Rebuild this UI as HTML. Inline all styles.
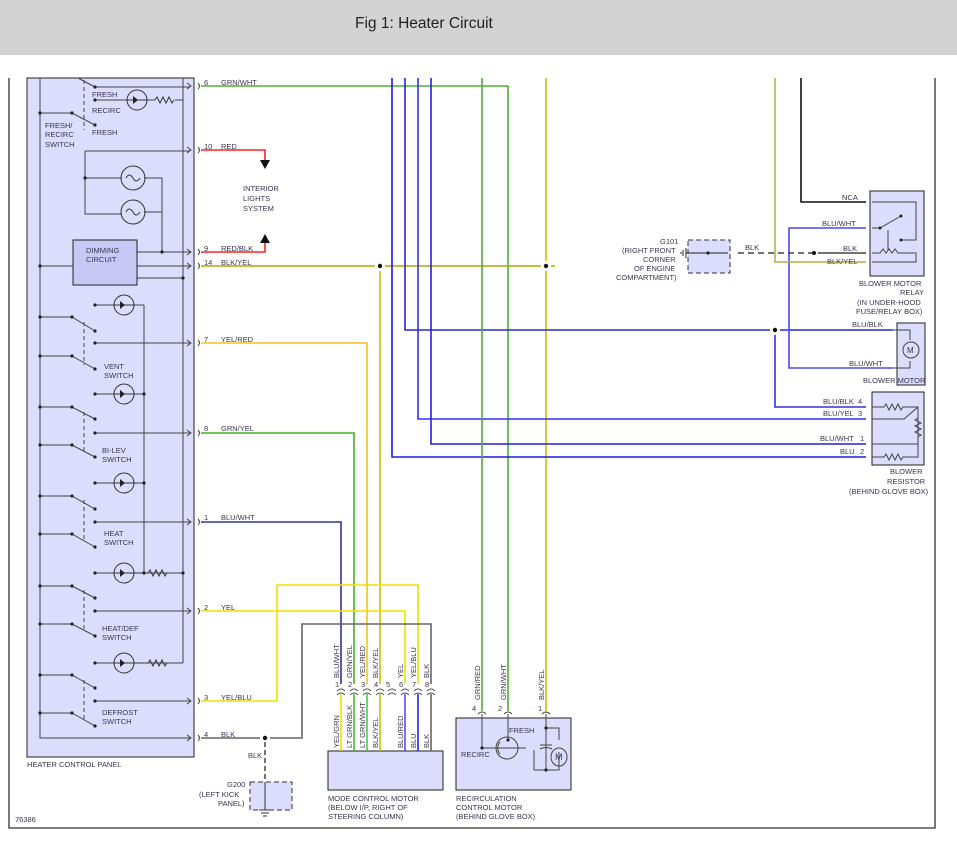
<!DOCTYPE html>
<html><head><meta charset="utf-8"><style>
html,body{margin:0;padding:0;background:#fff;width:957px;height:849px;overflow:hidden}
.hd{position:absolute;left:0;top:0;width:957px;height:55px;background:#d3d3d3}
.hd span{position:absolute;left:355px;top:15px;font-family:"Liberation Sans",sans-serif;font-size:15.5px;color:#222;white-space:nowrap}
svg{position:absolute;left:0;top:0}
text{font-family:"Liberation Sans",sans-serif;font-size:7.5px;fill:#3a3550}
</style></head><body>
<div class="hd"><span>Fig 1: Heater Circuit</span></div>
<svg width="957" height="849" viewBox="0 0 957 849" style="top:0">
<g stroke="#333" stroke-width="1.3" fill="none">
<path d="M9 78V828H935V78"/>
</g>
<rect x="27" y="78" width="167" height="679" fill="#dcdcfc" stroke="#222" stroke-width="1"/>
<g stroke="#444" stroke-width="1" fill="none">
<path d="M40 78V738H190"/>
<path d="M183 78V663"/>
<path d="M144 305V573"/>
<path d="M95 87H190M95 87L78 78"/>
<path d="M95 100H130M145 100H155M40 113H72L95 125" />
<path d="M175 100H183"/>
<path d="M85 151H190M85 151V214H122M85 178H122M144 178H162V252M144 212H162"/>
<path d="M40 266H73M137 252H190M137 266H190M137 278H183"/>
<path d="M95 305H144M40 317H72L95 331M95 343H190M40 356H72L95 369"/>
<path d="M95 394H144"/>
<path d="M40 407H72L95 419M95 433H190M40 445H72L95 457M95 483H144"/>
<path d="M40 496H72L95 509M95 522H190M40 534H72L95 547M95 573H183"/>
<path d="M40 586H72L95 598M95 611H190M40 624H72L95 636M95 663H183"/>
<path d="M40 675H72L95 688M95 701H190M40 713H72L95 726"/>
</g>
<g stroke="#444" stroke-width="1" stroke-dasharray="4,3" fill="none"><path d="M84 80V130M84 322V365M84 412V452M84 500V542M84 590V632M84 680V720"/></g>
<rect x="73" y="240" width="64" height="45" fill="#c8c8f4" stroke="#222"/>
<text x="86" y="253">DIMMING</text><text x="86" y="262">CIRCUIT</text>
<g fill="none" stroke="#333" stroke-width="1">
<circle cx="133" cy="178" r="12"/><circle cx="133" cy="212" r="12"/>
<path d="M126 178q3-6 7 0q3 6 7 0M126 212q3-6 7 0q3 6 7 0"/>
<circle cx="137" cy="100" r="10"/><circle cx="124" cy="305" r="10"/><circle cx="124" cy="394" r="10"/><circle cx="124" cy="483" r="10"/><circle cx="124" cy="573" r="10"/><circle cx="124" cy="663" r="10"/>
<path d="M155 100l2-3 3 6 3-6 3 6 3-6 3 6 2-3M148 573l2-3 3 6 3-6 3 6 3-6 3 6 2-3M148 663l2-3 3 6 3-6 3 6 3-6 3 6 2-3"/>
<path d="M114 573H148M114 663H148M114 305H134M114 394H134M114 483H134M127 100H147"/>
</g>
<g fill="#222">
<path d="M133 96l5 4-5 4zM120 301l5 4-5 4zM120 390l5 4-5 4zM120 479l5 4-5 4zM120 569l5 4-5 4zM120 659l5 4-5 4z"/>
<circle cx="40" cy="266" r="1.6"/><circle cx="40" cy="317" r="1.6"/><circle cx="72" cy="317" r="1.6"/><circle cx="40" cy="356" r="1.6"/><circle cx="72" cy="356" r="1.6"/>
<circle cx="40" cy="407" r="1.6"/><circle cx="72" cy="407" r="1.6"/><circle cx="40" cy="445" r="1.6"/><circle cx="72" cy="445" r="1.6"/>
<circle cx="40" cy="496" r="1.6"/><circle cx="72" cy="496" r="1.6"/><circle cx="40" cy="534" r="1.6"/><circle cx="72" cy="534" r="1.6"/>
<circle cx="40" cy="586" r="1.6"/><circle cx="72" cy="586" r="1.6"/><circle cx="40" cy="624" r="1.6"/><circle cx="72" cy="624" r="1.6"/>
<circle cx="40" cy="675" r="1.6"/><circle cx="72" cy="675" r="1.6"/><circle cx="40" cy="713" r="1.6"/><circle cx="72" cy="713" r="1.6"/>
<circle cx="40" cy="113" r="1.6"/><circle cx="72" cy="113" r="1.6"/>
<circle cx="95" cy="87" r="1.6"/><circle cx="95" cy="100" r="1.6"/><circle cx="95" cy="125" r="1.6"/>
<circle cx="95" cy="305" r="1.6"/><circle cx="95" cy="331" r="1.6"/><circle cx="95" cy="343" r="1.6"/><circle cx="95" cy="369" r="1.6"/><circle cx="95" cy="394" r="1.6"/>
<circle cx="95" cy="419" r="1.6"/><circle cx="95" cy="433" r="1.6"/><circle cx="95" cy="457" r="1.6"/><circle cx="95" cy="483" r="1.6"/>
<circle cx="95" cy="509" r="1.6"/><circle cx="95" cy="522" r="1.6"/><circle cx="95" cy="547" r="1.6"/><circle cx="95" cy="573" r="1.6"/>
<circle cx="95" cy="598" r="1.6"/><circle cx="95" cy="611" r="1.6"/><circle cx="95" cy="636" r="1.6"/><circle cx="95" cy="663" r="1.6"/>
<circle cx="95" cy="688" r="1.6"/><circle cx="95" cy="701" r="1.6"/><circle cx="95" cy="726" r="1.6"/>
<circle cx="144" cy="394" r="1.6"/><circle cx="144" cy="483" r="1.6"/><circle cx="144" cy="573" r="1.6"/><circle cx="183" cy="573" r="1.6"/><circle cx="162" cy="252" r="1.6"/><circle cx="183" cy="278" r="1.6"/><circle cx="85" cy="178" r="1.6"/>
</g>
<text x="92" y="97">FRESH</text><text x="92" y="113">RECIRC</text><text x="92" y="135">FRESH</text>
<text x="45" y="128">FRESH/</text><text x="45" y="137">RECIRC</text><text x="45" y="147">SWITCH</text>
<text x="104" y="369">VENT</text><text x="104" y="378">SWITCH</text>
<text x="102" y="453">BI-LEV</text><text x="102" y="462">SWITCH</text>
<text x="104" y="536">HEAT</text><text x="104" y="545">SWITCH</text>
<text x="102" y="631">HEAT/DEF</text><text x="102" y="640">SWITCH</text>
<text x="102" y="715">DEFROST</text><text x="102" y="724">SWITCH</text>
<text x="27" y="767">HEATER CONTROL PANEL</text>
<text x="15" y="822">76386</text>
<g stroke="#444" fill="none" stroke-width="1">
<path d="M187 83l4 3-4 3M187 147l4 3-4 3M187 249l4 3-4 3M187 263l4 3-4 3M187 340l4 3-4 3M187 430l4 3-4 3M187 519l4 3-4 3M187 608l4 3-4 3M187 698l4 3-4 3M187 735l4 3-4 3"/>
<path d="M198 83q3 3 0 6M198 147q3 3 0 6M198 249q3 3 0 6M198 263q3 3 0 6M198 340q3 3 0 6M198 430q3 3 0 6M198 519q3 3 0 6M198 608q3 3 0 6M198 698q3 3 0 6M198 735q3 3 0 6"/>
</g>
<g>
<text x="204" y="85">6</text><text x="221" y="85">GRN/WHT</text>
<text x="204" y="149">10</text><text x="221" y="149">RED</text>
<text x="204" y="251">9</text><text x="221" y="251">RED/BLK</text>
<text x="204" y="265">14</text><text x="221" y="265">BLK/YEL</text>
<text x="204" y="342">7</text><text x="221" y="342">YEL/RED</text>
<text x="204" y="431">8</text><text x="221" y="431">GRN/YEL</text>
<text x="204" y="520">1</text><text x="221" y="520">BLU/WHT</text>
<text x="204" y="610">2</text><text x="221" y="610">YEL</text>
<text x="204" y="700">3</text><text x="221" y="700">YEL/BLU</text>
<text x="204" y="737">4</text><text x="221" y="737">BLK</text>
</g>
<g fill="none" stroke-width="1.6">
<path d="M201 86H508V711" stroke="#50b030"/>
<path d="M201 150H265V165M201 252H265V238" stroke="#ff2020"/>
<path d="M201 266H375M385 266H541M551 266H555" stroke="#b0a800"/>
<path d="M546 78V261M546 271V711M380 271V684" stroke="#c8c000"/>
<path d="M201 343H367V684" stroke="#f8c020"/>
<path d="M201 433H354V684" stroke="#40b020"/>
<path d="M201 522H341V684" stroke="#3030a0"/>
<path d="M201 611H405V684" stroke="#f0e000"/>
<path d="M201 701H277V585H418V684" stroke="#f0e000"/>
<path d="M201 738H260M270 738H302V624H431V684" stroke="#666"/>
<path d="M392 78V457H866" stroke="#1818e8"/>
<path d="M405 78V330H770M780 330H893" stroke="#2828d0"/>
<path d="M418 78V419H866" stroke="#3030f0"/>
<path d="M431 78V444H866" stroke="#2020e0"/>
<path d="M775 335V407H866" stroke="#3030e0"/>
<path d="M866 228H789V368H893" stroke="#4848f0"/>
<path d="M482 78V711" stroke="#50a838"/>
<path d="M775 78V262H866" stroke="#b8b040"/>
<path d="M801 78V202H866" stroke="#111"/>
<path d="M818 253H866" stroke="#444"/>
</g>
<path d="M738 253H814" stroke="#444" stroke-width="1.5" stroke-dasharray="6,4"/>
<g fill="#111"><circle cx="380" cy="266" r="2.2"/><circle cx="546" cy="266" r="2.2"/><circle cx="775" cy="330" r="2.2"/><circle cx="814" cy="253" r="2"/><circle cx="265" cy="738" r="2.2"/>
<path d="M260 160h10l-5 9zM260 243h10l-5-9z"/></g>
<text x="243" y="191">INTERIOR</text><text x="243" y="201">LIGHTS</text><text x="243" y="211">SYSTEM</text>
<path d="M265 742V782" stroke="#444" stroke-width="1.5" stroke-dasharray="5,3"/>
<rect x="250" y="782" width="42" height="28" fill="#dcdcfc" stroke="#333" stroke-dasharray="5,3"/>
<path d="M265 782V810M259 810h12M261 813h8M263 816h4" stroke="#333" fill="none"/>
<text x="248" y="758">BLK</text>
<text x="227" y="787">G200</text><text x="199" y="797">(LEFT KICK</text><text x="218" y="806">PANEL)</text>
<rect x="328" y="751" width="115" height="39" fill="#dcdcfc" stroke="#222"/>
<g fill="none" stroke-width="1.6">
<path d="M341 694V751" stroke="#e8e000"/><path d="M354 694V751" stroke="#40c020"/><path d="M367 694V751" stroke="#40d040"/><path d="M380 694V751" stroke="#c8c000"/>
<path d="M405 694V751" stroke="#5050f0"/><path d="M418 694V751" stroke="#2020e8"/><path d="M431 694V751" stroke="#666"/>
</g>
<g fill="none" stroke="#555" stroke-width="1"><path d="M337 691q4-4 8 0M350 691q4-4 8 0M363 691q4-4 8 0M376 691q4-4 8 0M388 691q4-4 8 0M401 691q4-4 8 0M414 691q4-4 8 0M427 691q4-4 8 0M337 695q4-4 8 0M350 695q4-4 8 0M363 695q4-4 8 0M376 695q4-4 8 0M388 695q4-4 8 0M401 695q4-4 8 0M414 695q4-4 8 0M427 695q4-4 8 0"/></g>
<g><text x="335" y="687">1</text><text x="348" y="687">2</text><text x="361" y="687">3</text><text x="374" y="687">4</text><text x="386" y="687">5</text><text x="399" y="687">6</text><text x="412" y="687">7</text><text x="425" y="687">8</text>
<text transform="translate(339,678) rotate(-90)">BLU/WHT</text><text transform="translate(352,678) rotate(-90)">GRN/YEL</text><text transform="translate(365,678) rotate(-90)">YEL/RED</text><text transform="translate(378,678) rotate(-90)">BLK/YEL</text><text transform="translate(403,678) rotate(-90)">YEL</text><text transform="translate(416,678) rotate(-90)">YEL/BLU</text><text transform="translate(429,678) rotate(-90)">BLK</text>
<text transform="translate(339,748) rotate(-90)">YEL/GRN</text><text transform="translate(352,748) rotate(-90)">LT GRN/BLK</text><text transform="translate(365,748) rotate(-90)">LT GRN/WHT</text><text transform="translate(378,748) rotate(-90)">BLK/YEL</text><text transform="translate(403,748) rotate(-90)">BLU/RED</text><text transform="translate(416,748) rotate(-90)">BLU</text><text transform="translate(429,748) rotate(-90)">BLK</text>
<text x="328" y="801">MODE CONTROL MOTOR</text><text x="328" y="810">(BELOW I/P, RIGHT OF</text><text x="328" y="819">STEERING COLUMN)</text></g>
<rect x="456" y="718" width="115" height="72" fill="#dcdcfc" stroke="#222"/>
<g fill="none" stroke="#444" stroke-width="1">
<path d="M478 714q4-4 8 0M504 714q4-4 8 0M542 714q4-4 8 0"/>
<path d="M482 714V748H500H526M508 714V740M546 714V770H559V752M546 728H559V740M534 770H546M534 750V770"/>
<circle cx="507" cy="748" r="11"/><path d="M500 742a9 9 0 0 0 0 12"/>
<path d="M540 745h12M540 749q6-3 12 0"/>
<ellipse cx="559" cy="757" rx="8" ry="9"/>
</g>
<g fill="#222"><circle cx="482" cy="748" r="1.6"/><circle cx="508" cy="740" r="1.6"/><circle cx="546" cy="728" r="1.6"/><circle cx="546" cy="770" r="1.6"/></g>
<text x="509" y="733">FRESH</text><text x="461" y="757">RECIRC</text><text x="555" y="760" style="font-size:9px">M</text>
<text x="472" y="711">4</text><text x="498" y="711">2</text><text x="538" y="711">1</text>
<text transform="translate(480,700) rotate(-90)">GRN/RED</text><text transform="translate(506,700) rotate(-90)">GRN/WHT</text><text transform="translate(544,700) rotate(-90)">BLK/YEL</text>
<text x="456" y="801">RECIRCULATION</text><text x="456" y="810">CONTROL MOTOR</text><text x="456" y="819">(BEHIND GLOVE BOX)</text>
<rect x="688" y="240" width="42" height="33" fill="#dcdcfc" stroke="#333" stroke-dasharray="5,3"/>
<path d="M686 253H728M686 248v10M683 250v6M681 252v2" stroke="#222" fill="none"/><circle cx="708" cy="253" r="1.6" fill="#222"/>
<text x="660" y="244">G101</text><text x="622" y="253">(RIGHT FRONT</text><text x="643" y="262">CORNER</text><text x="634" y="271">OF ENGINE</text><text x="616" y="280">COMPARTMENT)</text>
<text x="745" y="250">BLK</text>
<rect x="870" y="191" width="54" height="85" fill="#dcdcfc" stroke="#222"/>
<g fill="none" stroke="#444"><path d="M872 202H916V240H901M872 228H880L901 216M872 253H880l3-4 3 4 3-4 3 4 3-4 3 4H916V262H872M888 230V250" /></g>
<circle cx="880" cy="228" r="1.5" fill="#222"/><circle cx="901" cy="216" r="1.5" fill="#222"/><circle cx="901" cy="240" r="1.5" fill="#222"/>
<text x="842" y="200">NCA</text><text x="822" y="226">BLU/WHT</text><text x="843" y="251">BLK</text><text x="827" y="264">BLK/YEL</text>
<text x="859" y="286">BLOWER MOTOR</text><text x="900" y="295">RELAY</text><text x="857" y="305">(IN UNDER-HOOD</text><text x="856" y="314">FUSE/RELAY BOX)</text>
<rect x="897" y="323" width="28" height="62" fill="#dcdcfc" stroke="#222"/>
<path d="M893 330H910V340M910 361V368H893" stroke="#444" fill="none"/>
<circle cx="911" cy="350" r="8" fill="#dcdcfc" stroke="#444"/><text x="907" y="353" style="font-size:8px">M</text>
<text x="852" y="327">BLU/BLK</text><text x="849" y="366">BLU/WHT</text><text x="863" y="383">BLOWER MOTOR</text>
<rect x="872" y="392" width="52" height="73" fill="#dcdcfc" stroke="#222"/>
<g fill="none" stroke="#444"><path d="M872 407H884l2-3 3 6 3-6 3 6 3-6 3 6 2-3H918V444M872 419H904L918 407M918 418l-3 2 6 3-6 3 6 3-6 3 6 3-3 2M872 444H918M872 457H884l2-3 3 6 3-6 3 6 3-6 3 6 2-3H918V444"/></g>
<text x="823" y="404">BLU/BLK</text><text x="858" y="404">4</text><text x="823" y="416">BLU/YEL</text><text x="858" y="416">3</text>
<text x="820" y="441">BLU/WHT</text><text x="860" y="441">1</text><text x="840" y="454">BLU</text><text x="860" y="454">2</text>
<text x="890" y="474">BLOWER</text><text x="887" y="484">RESISTOR</text><text x="849" y="494">(BEHIND GLOVE BOX)</text>
</svg>
</body></html>
